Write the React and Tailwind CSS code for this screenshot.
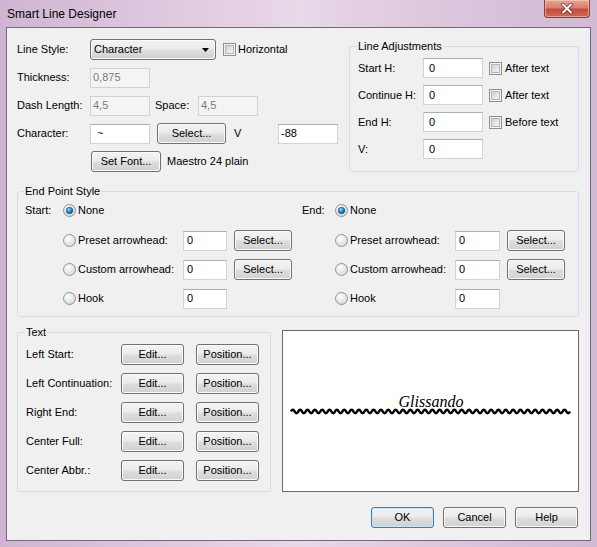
import React from 'react';

function Btn({children, w = 'w-[63px]', primary = false}) {
  return (
    <div
      className={
        `${w} h-[21px] shrink-0 flex items-center justify-center rounded-[3px] border ` +
        (primary
          ? 'border-[#3c7fb1] shadow-[inset_0_0_0_1px_#c8e6f7] '
          : 'border-[#707070] shadow-[inset_0_0_0_1px_#fbfbfb] ') +
        'bg-[linear-gradient(#f3f3f3_0%,#ebebeb_48%,#dddddd_52%,#d1d1d1_100%)] leading-none'
      }
    >
      {children}
    </div>
  );
}

function TextBox({value, w = 'w-[60px]', disabled = false, pl = 'pl-[4px]'}) {
  return (
    <div
      className={
        `${w} ${pl} h-[20px] shrink-0 flex items-center border leading-none ` +
        (disabled
          ? 'bg-[#f4f4f4] border-[#d2d2d2] text-[#7a7a7a]'
          : 'bg-white border-[#cfd3da] border-t-[#abadb3] text-black')
      }
    >
      {value}
    </div>
  );
}

function Check() {
  return (
    <svg width="13" height="13" viewBox="0 0 13 13" className="shrink-0">
      <defs>
        <linearGradient id="chk" x1="0" y1="0" x2="1" y2="1">
          <stop offset="0" stopColor="#cbcfd5" />
          <stop offset="1" stopColor="#f7f7f7" />
        </linearGradient>
      </defs>
      <rect x="0.5" y="0.5" width="12" height="12" fill="#f4f4f4" stroke="#8e8f8f" />
      <rect x="2.5" y="2.5" width="8" height="8" fill="url(#chk)" stroke="#b2b6bc" />
    </svg>
  );
}

function Radio({checked = false}) {
  return (
    <svg width="13" height="13" viewBox="0 0 13 13" className="shrink-0">
      <defs>
        <radialGradient id="rbg" cx="40%" cy="35%" r="75%">
          <stop offset="0" stopColor="#ffffff" />
          <stop offset="1" stopColor="#d2d2d2" />
        </radialGradient>
        <radialGradient id="rdot" cx="40%" cy="35%" r="70%">
          <stop offset="0" stopColor="#9adcfb" />
          <stop offset="0.55" stopColor="#2c83c5" />
          <stop offset="1" stopColor="#0d3f6f" />
        </radialGradient>
      </defs>
      <circle cx="6.5" cy="6.5" r="6" fill="url(#rbg)" stroke="#939393" />
      {checked && <circle cx="6.5" cy="6.5" r="3.3" fill="url(#rdot)" stroke="#1b5283" strokeWidth="0.6" />}
    </svg>
  );
}

function Group({title, className, children}) {
  return (
    <fieldset className={`border border-[#d5dfe5] rounded-[3px] ${className}`}>
      <legend className="px-[1px] -ml-[1px] leading-[16px]">{title}</legend>
      {children}
    </fieldset>
  );
}

function wavePath() {
  const x0 = 8;
  const x1 = 287;
  const y = 80.5;
  const cycles = 38;
  const half = (x1 - x0) / cycles / 2;
  let d = `M${x0} ${y} q${half / 2} -3.4 ${half} 0`;
  for (let i = 1; i < cycles * 2; i++) d += ` t${half} 0`;
  return d;
}

function EndSide({label, labelW, gap, textW, inputW}) {
  const rows = [
    {name: 'Preset arrowhead:', btn: true},
    {name: 'Custom arrowhead:', btn: true},
    {name: 'Hook', btn: false},
  ];
  return (
    <div className="flex flex-col">
      <div className="h-[21px] flex items-center">
        <span className={`${labelW} shrink-0`}>{label}</span>
        <Radio checked />
        <span className={gap}>None</span>
      </div>
      {rows.map((r, i) => (
        <div key={r.name} className={`h-[21px] flex items-center ${i === 0 ? 'mt-[9px]' : 'mt-[8px]'}`}>
          <span className={`${labelW} shrink-0`} />
          <Radio />
          <span className={`${gap} ${textW} shrink-0`}>{r.name}</span>
          <TextBox value="0" w={inputW} pl="pl-[3px]" />
          {r.btn && (
            <div className="ml-[7px]">
              <Btn w="w-[58px]">Select...</Btn>
            </div>
          )}
        </div>
      ))}
    </div>
  );
}

export default function App() {
  const adjustments = [
    {label: 'Start H:', check: 'After text'},
    {label: 'Continue H:', check: 'After text'},
    {label: 'End H:', check: 'Before text'},
    {label: 'V:', check: null},
  ];
  const textRows = ['Left Start:', 'Left Continuation:', 'Right End:', 'Center Full:', 'Center Abbr.:'];

  return (
    <div
      className={
        "w-[597px] h-[547px] flex flex-col px-[6px] pb-[6px] text-[11px] text-black font-['Liberation_Sans',Arial,sans-serif] " +
        'bg-[linear-gradient(90deg,#d0b5d2_0%,#ddc7de_25%,#e8d8e8_50%,#dbc6dc_75%,#d2bad4_100%)]'
      }
    >
      {/* title bar */}
      <div className="h-[27px] shrink-0 flex items-start justify-between">
        <div className="pl-[1px] pt-[6px] leading-[16px] text-[12px]">Smart Line Designer</div>
        <div
          className={
            'mr-[1px] w-[46px] h-[18px] flex items-center justify-center rounded-b-[4px] border border-t-0 ' +
            'border-[#8d3a35] bg-[linear-gradient(#e8a596_0%,#d7806f_45%,#c54c3c_55%,#cf6a55_100%)] ' +
            'shadow-[inset_0_0_0_1px_rgba(255,220,210,0.5)]'
          }
        >
          <svg width="12" height="11" viewBox="0 0 12 11">
            <path d="M2 1.5 10 9.5M10 1.5 2 9.5" stroke="#5a2a28" strokeWidth="3.4" strokeLinecap="round" />
            <path d="M2 1.5 10 9.5M10 1.5 2 9.5" stroke="#ffffff" strokeWidth="2" strokeLinecap="round" />
          </svg>
        </div>
      </div>

      {/* dialog body */}
      <div className="flex-1 border border-[#75687a] bg-[#f0f0f0] flex flex-col pl-[10px] pr-[11px]">
        {/* top section */}
        <div className="flex pt-[10px]">
          <div className="w-[332px] shrink-0 pt-[1px] flex flex-col gap-[7px]">
            <div className="h-[21px] flex items-center">
              <span className="w-[73px] shrink-0">Line Style:</span>
              <div
                className={
                  'w-[126px] h-[21px] shrink-0 flex items-center justify-between pl-[3px] pr-[6px] rounded-[3px] ' +
                  'border border-[#707070] shadow-[inset_0_0_0_1px_#fbfbfb] ' +
                  'bg-[linear-gradient(#f3f3f3_0%,#ebebeb_48%,#dddddd_52%,#d1d1d1_100%)] leading-none'
                }
              >
                <span>Character</span>
                <svg width="7" height="4" viewBox="0 0 7 4">
                  <path d="M0 0h7L3.5 4z" fill="#000" />
                </svg>
              </div>
              <span className="ml-[7px]">
                <Check />
              </span>
              <span className="ml-[2px]">Horizontal</span>
            </div>
            <div className="h-[21px] flex items-center">
              <span className="w-[73px] shrink-0">Thickness:</span>
              <TextBox value="0,875" disabled pl="pl-[2px]" />
            </div>
            <div className="h-[21px] flex items-center">
              <span className="w-[73px] shrink-0">Dash Length:</span>
              <TextBox value="4,5" disabled pl="pl-[2px]" />
              <span className="ml-[5px] w-[43px] shrink-0">Space:</span>
              <TextBox value="4,5" disabled pl="pl-[2px]" />
            </div>
            <div className="h-[21px] flex items-center">
              <span className="w-[73px] shrink-0">Character:</span>
              <TextBox value="~" pl="pl-[6px]" />
              <div className="ml-[7px]">
                <Btn w="w-[69px]">Select...</Btn>
              </div>
              <span className="ml-[8px] w-[44px] shrink-0">V</span>
              <TextBox value="-88" pl="pl-[2px]" />
            </div>
            <div className="h-[21px] flex items-center">
              <span className="w-[74px] shrink-0" />
              <Btn w="w-[70px]">Set Font...</Btn>
              <span className="ml-[6px]">Maestro 24 plain</span>
            </div>
          </div>

          <Group title="Line Adjustments" className="flex-1 pl-[8px] pt-[4px] pb-[12px]">
            <div className="flex flex-col gap-[7px]">
              {adjustments.map((a) => (
                <div key={a.label} className="h-[20px] flex items-center">
                  <span className="w-[65px] shrink-0">{a.label}</span>
                  <TextBox value="0" pl="pl-[5px]" />
                  {a.check && (
                    <>
                      <span className="ml-[6px]">
                        <Check />
                      </span>
                      <span className="ml-[3px]">{a.check}</span>
                    </>
                  )}
                </div>
              ))}
            </div>
          </Group>
        </div>

        {/* end point style */}
        <Group title="End Point Style" className="mt-[11px] pl-[7px] pt-[1px] pb-[7px]">
          <div className="flex">
            <div className="w-[277px] shrink-0">
              <EndSide label="Start:" labelW="w-[38px]" gap="ml-[2px]" textW="w-[105px]" inputW="w-[44px]" />
            </div>
            <EndSide label="End:" labelW="w-[33px]" gap="ml-[2px]" textW="w-[105px]" inputW="w-[45px]" />
          </div>
        </Group>

        {/* text + preview */}
        <div className="mt-[7px] flex items-start">
          <Group title="Text" className="w-[254px] shrink-0 pl-[8px] pt-[4px] pb-[10px]">
            <div className="flex flex-col gap-[8px]">
              {textRows.map((t) => (
                <div key={t} className="h-[21px] flex items-center">
                  <span className="w-[95px] shrink-0 whitespace-nowrap">{t}</span>
                  <Btn>Edit...</Btn>
                  <div className="ml-[12px]">
                    <Btn>Position...</Btn>
                  </div>
                </div>
              ))}
            </div>
          </Group>
          <div className="ml-[11px] mt-[6px] w-[297px] h-[162px] shrink-0 border border-[#6b6b6b] bg-white">
            <svg width="295" height="160" viewBox="0 0 295 160">
              <text
                x="148"
                y="76"
                textAnchor="middle"
                fontFamily="'Liberation Serif', serif"
                fontStyle="italic"
                fontSize="16"
                fill="#000"
              >
                Glissando
              </text>
              <path d={wavePath()} fill="none" stroke="#000" strokeWidth="2.6" />
            </svg>
          </div>
        </div>

        {/* buttons */}
        <div className="mt-[15px] flex justify-end gap-[9px] mr-[1px]">
          <Btn primary>OK</Btn>
          <Btn>Cancel</Btn>
          <Btn>Help</Btn>
        </div>
      </div>
    </div>
  );
}
